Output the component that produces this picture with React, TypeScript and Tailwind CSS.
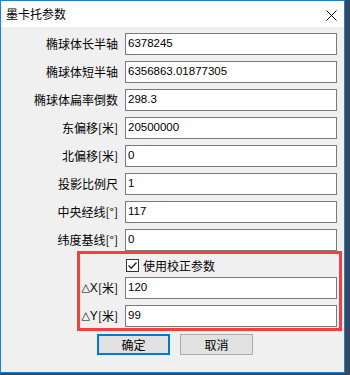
import React from "react";

const cjk = { fontFamily: '"Noto Sans CJK SC", "Noto Sans", sans-serif' };
const num = { fontFamily: '"Liberation Sans", Arial, sans-serif' };

function Field({ value }: { value: string }) {
  return (
    <div
      className="h-[22px] w-[212px] border border-[#7a7a7a] bg-white pl-[2px] flex items-center text-[11.5px] text-black"
      style={num}
    >
      {value}
    </div>
  );
}

function Label({ children }: { children: React.ReactNode }) {
  return (
    <div className="h-[22px] flex items-center justify-end text-[12px] text-black whitespace-nowrap" style={cjk}>
      {children}
    </div>
  );
}

function Delta({ axis }: { axis: string }) {
  return (
    <Label>
      <span className="text-[11px]" style={{ fontFamily: '"DejaVu Sans", sans-serif' }}>
        △
      </span>
      <span style={{ fontFamily: '"Liberation Sans", "Noto Sans CJK SC", sans-serif' }}>{axis}</span>
      <span>[米]</span>
    </Label>
  );
}

const rows: [string, string][] = [
  ["椭球体长半轴", "6378245"],
  ["椭球体短半轴", "6356863.01877305"],
  ["椭球体扁率倒数", "298.3"],
  ["东偏移[米]", "20500000"],
  ["北偏移[米]", "0"],
  ["投影比例尺", "1"],
  ["中央经线[°]", "117"],
  ["纬度基线[°]", "0"],
];

export default function App() {
  return (
    <div className="w-[350px] h-[375px] bg-[#354a60] overflow-hidden">
      <div className="w-[345px] h-[373px] border border-[#1f7fd6] bg-[#f0f0f0] flex flex-col">
        <div className="h-[26px] bg-white flex items-center justify-between pl-[5px] pr-[7px]">
          <span className="text-[12px] text-black leading-none" style={cjk}>
            墨卡托参数
          </span>
          <svg width="11" height="11" viewBox="0 0 11 11" className="mt-[2px]">
            <path d="M0.5 0.5 L10.5 10.5 M10.5 0.5 L0.5 10.5" stroke="#000" strokeWidth="1" />
          </svg>
        </div>
        <div className="pt-[6px] grid grid-cols-[117px_212px] gap-x-[7px] gap-y-[6px]">
          {rows.map(([l, v]) => (
            <React.Fragment key={l}>
              <Label>{l}</Label>
              <Field value={v} />
            </React.Fragment>
          ))}
        </div>
        <div className="ml-[76px] w-[265px] h-[80px] border-[3px] border-[#fe3c3c] pt-[5px]">
          <div className="grid grid-cols-[38px_212px] gap-x-[7px]">
            <div />
            <div className="h-[13px] flex items-center ml-[1px] gap-[4px]">
              <div className="w-[13px] h-[13px] border border-[#333333] bg-white flex items-center justify-center">
                <svg width="11" height="11" viewBox="0 0 11 11">
                  <path d="M1.5 5.5 L4.2 8.2 L9.5 2.5" stroke="#222" strokeWidth="1.3" fill="none" />
                </svg>
              </div>
              <span className="text-[12px] text-black whitespace-nowrap leading-none" style={cjk}>
                使用校正参数
              </span>
            </div>
          </div>
          <div className="grid grid-cols-[38px_212px] gap-x-[7px] gap-y-[6px] mt-[5px]">
            <Delta axis="X" />
            <Field value="120" />
            <Delta axis="Y" />
            <Field value="99" />
          </div>
        </div>
        <div className="mt-[3px] ml-[96px] flex gap-[10px]">
          <div
            className="w-[73px] h-[21px] border-2 border-[#0078d7] bg-[#e1e1e1] flex items-center justify-center text-[12px] text-black"
            style={cjk}
          >
            确定
          </div>
          <div
            className="w-[73px] h-[21px] border border-[#adadad] bg-[#e1e1e1] flex items-center justify-center text-[12px] text-black"
            style={cjk}
          >
            取消
          </div>
        </div>
      </div>
    </div>
  );
}
